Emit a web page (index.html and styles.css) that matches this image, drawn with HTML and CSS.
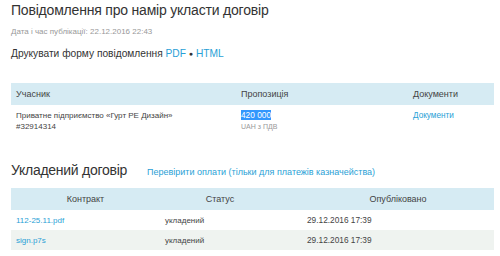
FILE: index.html
```html
<!DOCTYPE html>
<html lang="uk">
<head>
<meta charset="utf-8">
<link rel="stylesheet" href="styles.css">
</head>
<body>
<div class="page">
  <h1 class="title">Повідомлення про намір укласти договір</h1>
  <div class="pubdate">Дата і час публікації: 22.12.2016 22:43</div>
  <div class="print">Друкувати форму повідомлення <a href="#">PDF</a> <span class="dot">●</span> <a href="#">HTML</a></div>

  <table class="tbl bids">
    <thead>
      <tr><th class="c1">Учасник</th><th class="c2">Пропозиція</th><th class="c3">Документи</th></tr>
    </thead>
    <tbody>
      <tr>
        <td>Приватне підприємство «Гурт РЕ Дизайн»<br>#32914314</td>
        <td><span class="sel">420 000</span><br><span class="muted">UAH з ПДВ</span></td>
        <td><a href="#">Документи</a></td>
      </tr>
    </tbody>
  </table>

  <div class="section-head">
    <h2 class="title2">Укладений договір</h2>
    <a href="#" class="check">Перевірити оплати (тільки для платежів казначейства)</a>
  </div>

  <table class="tbl contract">
    <thead>
      <tr><th class="k1">Контракт</th><th class="k2">Статус</th><th class="k3">Опубліковано</th></tr>
    </thead>
    <tbody>
      <tr><td><a href="#">112-25.11.pdf</a></td><td>укладений</td><td class="date">29.12.2016 17:39</td></tr>
      <tr class="odd"><td><a href="#">sign.p7s</a></td><td>укладений</td><td class="date">29.12.2016 17:39</td></tr>
    </tbody>
  </table>
</div>
</body>
</html>
```

FILE: styles.css
```css
body {
  margin: 0;
  font-family: "Liberation Sans", Arial, sans-serif;
  color: #333;
  background: #fff;
}
.page {
  padding: 0 6px 0 11px;
}
a {
  color: #2a9fd6;
  text-decoration: none;
}
.title {
  margin: 0;
  font-size: 14px;
  letter-spacing: -0.2px;
  font-weight: normal;
  line-height: 20px;
  color: #333;
}
.pubdate {
  margin-top: 6px;
  font-size: 8px;
  line-height: 12px;
  color: #999;
}
.print {
  margin-top: 9px;
  font-size: 10.2px;
  line-height: 14px;
  color: #333;
}
.dot {
  font-size: 7px;
  vertical-align: 1px;
  color: #333;
}
.tbl {
  width: 100%;
  border-collapse: collapse;
  font-size: 8px;
}
.tbl th {
  background: #d6ebf3;
  font-weight: normal;
  font-size: 9px;
  height: 22px;
  padding: 0 5px;
  color: #444;
}
.tbl td {
  padding: 0 5px;
  color: #444;
}
.bids {
  margin-top: 22px;
}
.bids th {
  text-align: left;
}
.bids .c1 { width: 215px; }
.bids .c2 { width: 162px; }
.bids td {
  vertical-align: top;
  padding-top: 5px;
  padding-bottom: 8px;
  line-height: 11px;
}
.bids a {
  font-size: 8.2px;
}
.sel {
  background: #3297fd;
  color: #fff;
  font-size: 8.3px;
}
.muted {
  color: #999;
  font-size: 7px;
}
.section-head {
  margin-top: 20px;
  display: flex;
  align-items: baseline;
  gap: 20px;
}
.title2 {
  margin: 0;
  font-size: 14px;
  letter-spacing: -0.27px;
  font-weight: normal;
  line-height: 20px;
  color: #333;
}
.check {
  font-size: 9px;
}
.contract {
  margin-top: 8px;
}
.contract th {
  text-align: center;
}
.contract .k1 { width: 139px; }
.contract .k2 { width: 110px; padding-right: 27px; }
.contract td {
  height: 20px;
  line-height: 11px;
}
.contract .date {
  font-size: 8.3px;
}
.contract .odd td {
  background: #eff3f0;
}
```
